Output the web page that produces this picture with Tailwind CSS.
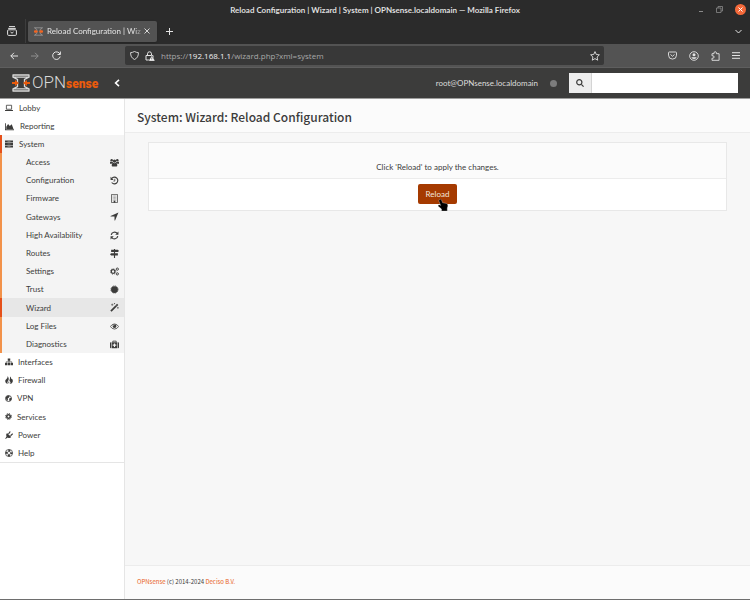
<!DOCTYPE html>
<html lang="en">
<head>
    <meta charset="UTF-8">
    <meta name="viewport" content="width=device-width, initial-scale=1">
    <title>Reload Configuration | Wizard | System | OPNsense.localdomain</title>
    <script src="https://cdn.jsdelivr.net/npm/@tailwindcss/browser@4"></script>
</head>
<body class="min-h-screen flex flex-col bg-white text-[#3c3c3b] text-[8px] leading-[18px] font-[Lato,sans-serif] border-b border-[#6e6e6e]">
    <!-- Icon sprite -->
    <svg class="hidden">
      <symbol id="laptop" viewBox="0 0 16 16"><path d="M2.800 2.500h10.400v8H2.800z" fill="none" stroke="currentColor" stroke-width="1.600"/><path d="M0 12h16v1q0 1.200-1 1.200H1Q0 14.200 0 13z"/></symbol>
      <symbol id="chart" viewBox="0 0 16 16"><path d="M0 2h1.500v11H16v1.500H0z"/><path d="M2.300 12.300V8.500L5.500 3.500l3 3.500L12 4l3 8.300z"/></symbol>
      <symbol id="server" viewBox="0 0 16 16"><path d="M0 1h16v4H0zM0 6h16v4H0zM0 11h16v4H0z"/><path d="M5 3h6M5 8h6M5 13h6" stroke="#aaa" stroke-width="1"/></symbol>
      <symbol id="users" viewBox="0 0 16 16"><circle cx="3" cy="4" r="2.200"/><circle cx="13" cy="4" r="2.200"/><circle cx="8" cy="5.500" r="3"/><path d="M0 10V7.500Q1 6 2 6.500q1.500 1 3 .3Q5 8 5.500 8.500 3.500 9 3 10zM16 10V7.500Q15 6 14 6.500q-1.500 1-3 .3Q11 8 10.500 8.500 12.500 9 13 10zM3 13.500Q3 9 5.500 8.500q2.500 1.500 5 0Q13 9 13 13.500q0 1.500-1.500 1.500h-7Q3 15 3 13.500z"/></symbol>
      <symbol id="history" viewBox="0 0 16 16"><path d="M3.200 4.200A6 6 0 1 1 3 11.500" fill="none" stroke="currentColor" stroke-width="2"/><path d="M1 1.500V7h5.500z"/><path d="M8.500 5v4H6" fill="none" stroke="currentColor" stroke-width="1.400"/></symbol>
      <symbol id="building" viewBox="0 0 16 16"><path d="M2.700 .7h10.600v14.600H2.700z" fill="none" stroke="currentColor" stroke-width="1.300"/><path d="M5 3.500h6M5 6h6M5 8.500h6M5 11h6" stroke="currentColor" stroke-width="1.100" stroke-dasharray="1.200 1.200"/><path d="M6.500 12h3v3.500h-3z"/></symbol>
      <symbol id="location" viewBox="0 0 16 16"><path d="M15 1 9 15H8V8H1V7z"/></symbol>
      <symbol id="refresh" viewBox="0 0 16 16"><path d="M2.200 7A6 6 0 0 1 13 4.500M13.800 9A6 6 0 0 1 3 11.500" fill="none" stroke="currentColor" stroke-width="2.100"/><path d="M15 1v5.700H9.300zM1 15V9.300h5.700z"/></symbol>
      <symbol id="signs" viewBox="0 0 16 16"><path d="M7 0h2v16H7z"/><path d="M2 1.500h12l2 2-2 2H2zM14 7.500H2l-2 2 2 2h12z"/></symbol>
      <symbol id="cogs" viewBox="0 0 16 16"><circle cx="5.500" cy="8" r="3.200" fill="none" stroke="currentColor" stroke-width="2.200"/><circle cx="5.500" cy="8" r="4.800" fill="none" stroke="currentColor" stroke-width="1.400" stroke-dasharray="1.900 1.870"/><circle cx="13" cy="3.800" r="2" fill="none" stroke="currentColor" stroke-width="1.700"/><circle cx="13" cy="12.200" r="2" fill="none" stroke="currentColor" stroke-width="1.700"/></symbol>
      <symbol id="certificate" viewBox="0 0 16 16"><circle cx="8" cy="8" r="6"/><circle cx="8" cy="8" r="6.300" fill="none" stroke="currentColor" stroke-width="1.500" stroke-dasharray="2 1.300"/></symbol>
      <symbol id="magic" viewBox="0 0 16 16"><path d="M.5 13.200 12.500 1.200l2.300 2.300L2.800 15.500z"/><path d="m10 4 2 2" stroke="#e7e7e7" stroke-width=".8"/><path d="M4 1v4M2 3h4M8 0v2M7 1h2M14 7v3M12.500 8.500h3" stroke="currentColor" stroke-width="1"/></symbol>
      <symbol id="eye" viewBox="0 0 16 16"><path d="M.7 8Q3.500 3.500 8 3.500T15.300 8Q12.500 12.500 8 12.500T.7 8z" fill="none" stroke="currentColor" stroke-width="1.400"/><circle cx="8" cy="7.300" r="3.500"/><path d="M6 7q0-2 2-2" fill="none" stroke="#f4f4f4" stroke-width=".8"/></symbol>
      <symbol id="medkit" viewBox="0 0 16 16"><path d="M5 4V2h6v2" fill="none" stroke="currentColor" stroke-width="1.500"/><path d="M0 5.500Q0 4 1.500 4H2v10.500h-.5Q0 14.500 0 13zM3 4h10v10.500H3zM16 5.500Q16 4 14.500 4H14v10.500h.5q1.500 0 1.500-1.500z"/><path d="M8 6v6.500M4.800 9.200h6.400" stroke="#f4f4f4" stroke-width="2"/></symbol>
      <symbol id="sitemap" viewBox="0 0 16 16"><path d="M5.500 1h5v4.500h-5zM0 10h4.700v4.700H0zM5.700 10h4.600v4.700H5.700zM11.300 10H16v4.700h-4.700z"/><path d="M2.200 11V7.800h11.600V11M8 4v7" fill="none" stroke="currentColor" stroke-width="1.400"/></symbol>
      <symbol id="fire" viewBox="0 0 16 16"><path d="M5 0Q6 4 2.500 6.500T1.500 13.500q1.500 2 4 2.500Q4 12.500 6 10q2-2 1.300-5.500Q6.800 1.500 5 0zM10 1q3 2 2 5.500 1-.5 1.200-1.500Q17 8 15 12.500q-1.500 3.500-5 3.500 1.500-2.500.5-4.500-2-1-1.500-3.500Q10.500 5 10 1zM7 10.500q2.300 2 1.200 5-2.200-2-1.200-5z"/></symbol>
      <symbol id="globe" viewBox="0 0 16 16"><circle cx="8" cy="8" r="6.800" fill="none" stroke="currentColor" stroke-width="2"/><path d="M2 4.500 7 1l3.500 1.500L9 6 6 7l1 2-1.500 4L3 10 2 7zM10 7.500l5-1-.5 4.500-3.500 3-1.500-3z"/></symbol>
      <symbol id="gear" viewBox="0 0 16 16"><circle cx="8" cy="8" r="4" fill="none" stroke="currentColor" stroke-width="3.600"/><circle cx="8" cy="8" r="6.800" fill="none" stroke="currentColor" stroke-width="2.200" stroke-dasharray="2.800 2.540"/></symbol>
      <symbol id="plug" viewBox="0 0 16 16"><path d="M4 4l8.500 8Q9.500 15.500 5.500 13L2.500 15 0 16l3-5Q1 7 4 4z"/><path d="m7 6 3.500-5M11 9.500l4.500-4" stroke="currentColor" stroke-width="2.400"/></symbol>
      <symbol id="ring" viewBox="0 0 16 16"><circle cx="8" cy="8" r="7.200" fill="none" stroke="currentColor" stroke-width="1.500"/><circle cx="8" cy="8" r="3.200" fill="none" stroke="currentColor" stroke-width="1.300"/><circle cx="8" cy="8" r="5" fill="none" stroke="currentColor" stroke-width="3.500" stroke-dasharray="4 3.850" stroke-dashoffset="2"/></symbol>
      <symbol id="hourglass" viewBox="0 0 18 18">
        <path d="M.5 1h17M.5 17h17M1 3.200h4M13 3.200h4M1 14.800h4M13 14.800h4M4.500 3.200h9M4.500 14.800h9M1 1v2l4.500 2.500v7L1 15v2M17 1v2l-4.500 2.500v7L17 15v2" fill="none" stroke="currentColor" stroke-width="1.300"/>
        <path d="M0 8h3V6l4 3-4 3v-2H0zM18 8h-3V6l-4 3 4 3v-2h3z" fill="#ea5b0c"/>
      </symbol>
      <symbol id="favicon" viewBox="0 0 9 9">
        <path d="M0 .8h9M0 8.200h9M1 1l2 1.700v3.600L1 8M8 1 6 2.700v3.600L8 8" fill="none" stroke="currentColor" stroke-width=".8"/>
        <path d="M0 3.500h1.500V2.500L4 4.500l-2.500 2v-1H0zM9 3.500H7.500V2.500L5 4.500l2.500 2v-1H9z" fill="#f26522"/>
      </symbol>
    </svg>

    <!-- Window title -->
    <div class="grid grid-cols-[1fr_auto_1fr] items-center h-[19px] bg-[#2b2b2b] text-[#dfdfdf]">
      <span></span>
      <div class="font-bold text-[8px] whitespace-nowrap">Reload Configuration | Wizard | System | OPNsense.localdomain — Mozilla Firefox</div>
      <div class="flex justify-end items-center gap-[12px] pr-[4px] text-[#8a8a8a]">
        <button aria-label="Minimize"><svg class="w-[6px] h-[6px]" viewBox="0 0 6 6"><path d="M1 4.500h4" stroke="currentColor"/></svg></button>
        <button aria-label="Maximize"><svg class="w-[7px] h-[7px]" viewBox="0 0 7 7" fill="none" stroke="currentColor" stroke-width=".8"><path d="M.5 2h4.500v4.500H.5zM2 2V.5h4.500V5H5"/></svg></button>
        <button aria-label="Close"><svg class="w-[11px] h-[11px]" viewBox="0 0 11 11"><circle cx="5.500" cy="5.500" r="5.500" fill="#f4693a"/><path d="m3.500 3.500 4 4m0-4-4 4" stroke="#fff"/></svg></button>
      </div>
    </div>

    <!-- Tabs -->
    <div class="flex items-center h-[25px] pb-px bg-[#2b2b2b] text-[#e4e4e4]">
      <button class="ml-[7px]" aria-label="Recent browsing"><svg class="w-[10px] h-[10px]" viewBox="0 0 10 10" fill="none" stroke="currentColor" stroke-width="1"><path d="M2 .6h6M1.200 2.400h7.600"/><rect x=".6" y="3.800" width="8.800" height="5.600" rx="1"/><path d="m3.500 6 1.500 1.200L6.500 6"/></svg></button>
      <span class="ml-[8px] mr-[2px] w-px h-full bg-[#3d3d3d]"></span>
      <div class="flex items-center h-[21px] w-[129px] rounded-[2px] bg-[#535353] pl-[6px] pr-[7px] shadow-sm">
        <svg class="w-[9px] h-[9px] shrink-0 text-[#9a9a9a]"><use href="#favicon"/></svg>
        <span class="ml-[4px] flex-1 whitespace-nowrap text-[8px] mask-r-from-90%">Reload Configuration | Wiz</span>
        <button aria-label="Close tab"><svg class="w-[6px] h-[6px]" viewBox="0 0 6 6"><path d="m.5.5 5 5m0-5-5 5" stroke="currentColor" stroke-width=".9"/></svg></button>
      </div>
      <button class="ml-[9px]" aria-label="New tab"><svg class="w-[7px] h-[7px]" viewBox="0 0 7 7"><path d="M3.500 0v7M0 3.500h7" stroke="currentColor"/></svg></button>
      <button class="ml-auto mr-[8px]" aria-label="List all tabs"><svg class="w-[7px] h-[7px]" viewBox="0 0 7 7" fill="none"><path d="m.5 2 3 3 3-3" stroke="currentColor"/></svg></button>
    </div>

    <!-- Toolbar -->
    <div class="flex items-center h-[24px] bg-[#535353] text-[#e4e4e4] font-['Open_Sans',sans-serif] border-b border-[#5e5e5e]">
      <button class="ml-[10px]" aria-label="Back"><svg class="w-[8px] h-[8px]" viewBox="0 0 8 8" fill="none" stroke="currentColor"><path d="M8 4H.8M4 .8.8 4 4 7.200"/></svg></button>
      <button class="ml-[13px] text-[#8f8f8f]" aria-label="Forward"><svg class="w-[8px] h-[8px]" viewBox="0 0 8 8" fill="none" stroke="currentColor"><path d="M0 4h7.200M4 .8 7.200 4 4 7.200"/></svg></button>
      <button class="ml-[13px]" aria-label="Reload page"><svg class="w-[9px] h-[9px]" viewBox="0 0 9 9" fill="none" stroke="currentColor"><path d="M8 3.200A3.800 3.800 0 1 0 8.200 5.500M8.400.5v3H5.500"/></svg></button>
      <div class="ml-[64px] flex-1 flex items-center h-[19px] rounded-[2px] bg-[#383838] pl-[5px] pr-[4px]">
        <svg class="w-[9px] h-[9px] shrink-0" viewBox="0 0 9 9" fill="none" stroke="currentColor" stroke-width=".9"><path d="M4.500.5Q6.500 1.600 8.400 1.600 8.600 6.600 4.500 8.500.4 6.600.6 1.600 2.500 1.600 4.500.5z"/></svg>
        <svg class="ml-[6px] w-[10px] h-[10px] shrink-0" viewBox="0 0 10 10"><path d="M2.500 4V2.800a2 2 0 0 1 4 0V4M1 4.500h7v4.500H1z" fill="none" stroke="currentColor"/><path d="M6.800 4.500 10 10H3.600z" fill="#fff" stroke="#383838" stroke-width=".4"/><path d="M6.800 6.500v2" stroke="#383838" stroke-width=".7"/></svg>
        <div class="ml-[6px] flex-1 text-[8px] text-[#a8a8a8]">https://<span class="text-[#f2f2f2]">192.168.1.1</span>/wizard.php?xml=system</div>
        <button aria-label="Bookmark this page"><svg class="w-[10px] h-[10px]" viewBox="0 0 10 10" fill="none" stroke="currentColor" stroke-width=".9" stroke-linejoin="round"><path d="m5 .6 1.300 2.900 3.100.3L7.100 6l.6 3.200L5 7.600 2.300 9.200 2.900 6 .6 3.800l3.100-.3z"/></svg></button>
      </div>
      <div class="ml-[64px] mr-[10px] flex items-center gap-[12px]">
        <button aria-label="Pocket"><svg class="w-[9px] h-[9px]" viewBox="0 0 9 9" fill="none" stroke="currentColor" stroke-width=".9"><path d="M1.300 1h6.400q.8 0 .8.8v2.300a4 4 0 0 1-8 0V1.800Q.5 1 1.300 1zM2.500 3.500l2 1.800 2-1.800"/></svg></button>
        <button aria-label="Account"><svg class="w-[10px] h-[10px]" viewBox="0 0 10 10"><circle cx="5" cy="5" r="4.300" fill="none" stroke="currentColor" stroke-width=".9"/><circle cx="5" cy="3.700" r="1.500" fill="currentColor"/><path d="M2.300 6.200h5.400Q7.300 8 5 8T2.300 6.200z" fill="currentColor"/></svg></button>
        <button aria-label="Extensions"><svg class="w-[9px] h-[10px]" viewBox="0 0 9 10" fill="none" stroke="currentColor" stroke-width=".9" stroke-linejoin="round"><path d="M3 2.700V1.900a1.200 1.200 0 0 1 2.400 0v.8h2.700v6.600H1V7.200h.9a1.200 1.200 0 0 0 0-2.400H1V2.700z"/></svg></button>
        <button aria-label="Menu"><svg class="w-[8px] h-[7px]" viewBox="0 0 8 7" stroke="currentColor"><path d="M0 .7h8M0 3.500h8M0 6.300h8"/></svg></button>
      </div>
    </div>

    <!-- OPNsense header -->
    <header class="flex items-center h-[31px] pl-[12px] pr-[12px] bg-[#3c3c3b] text-[#dcdcdc] border-b border-[#9d9d9c]">
      <a href="#" class="flex items-center text-[#d8d8d8] font-[Roboto,sans-serif]">
        <svg class="w-[18px] h-[18px] mr-[2px] text-[#dadada]"><use href="#hourglass"/></svg>
        <span class="flex items-baseline">
          <span class="text-[17px] font-light">OPN</span>
          <span class="text-[12px] font-black text-[#ea5b0c]">sense</span>
        </span>
      </a>
      <button class="ml-[16px] text-white" aria-label="Toggle sidebar"><svg class="w-[6px] h-[8px]" viewBox="0 0 6 8" fill="none"><path d="M5 .8 1.600 4 5 7.200" stroke="currentColor" stroke-width="1.600"/></svg></button>
      <span class="ml-auto">root@OPNsense.localdomain</span>
      <span class="ml-[12px] w-[7px] h-[7px] rounded-full bg-[#7d7d7d]"></span>
      <form class="ml-[12px] flex h-[20px] w-[169px] bg-white">
        <label for="search" class="flex items-center justify-center w-[23px] bg-[#ededed] border-r border-[#d4d4d4] text-[#3c3c3b]">
          <svg class="w-[8px] h-[8px]" viewBox="0 0 8 8" fill="none" stroke="currentColor" stroke-width="1.200"><circle cx="3.300" cy="3.300" r="2.600"/><path d="m5.300 5.300 2.300 2.300"/></svg>
        </label>
        <input id="search" type="text" aria-label="Search" class="flex-1 min-w-0 px-1 outline-none">
      </form>
    </header>

    <div class="flex-1 flex">
      <!-- Sidebar -->
      <aside class="w-[125px] shrink-0 border-r border-[#e5e5e5]">
        <nav class="border-b border-[#e5e5e5]">
          <a href="#" class="flex items-center h-[18px] pl-[5px] gap-[6px]"><svg class="w-[8px] h-[8px]" fill="currentColor"><use href="#laptop"/></svg>Lobby</a>
          <a href="#" class="flex items-center h-[18px] pl-[5px] gap-[6px]"><svg class="w-[9px] h-[9px]" fill="currentColor"><use href="#chart"/></svg>Reporting</a>
          <a href="#" class="flex items-center h-[18px] pl-[3px] gap-[6px] bg-[#f4f4f4] border-l-2 border-[#e5501a]"><svg class="w-[8px] h-[8px]" fill="currentColor"><use href="#server"/></svg>System</a>
          <div class="bg-[#f4f4f4] border-l-2 border-[#f2924a]">
            <a href="#" class="flex items-center justify-between h-[18px] pl-[24px] pr-[5px]">Access<svg class="w-[9px] h-[9px]" fill="currentColor"><use href="#users"/></svg></a>
            <a href="#" class="flex items-center justify-between h-[18px] pl-[24px] pr-[5px]">Configuration<svg class="w-[9px] h-[9px]" fill="currentColor"><use href="#history"/></svg></a>
            <a href="#" class="flex items-center justify-between h-[18px] pl-[24px] pr-[5px]">Firmware<svg class="w-[9px] h-[9px]" fill="currentColor"><use href="#building"/></svg></a>
            <a href="#" class="flex items-center justify-between h-[19px] pl-[24px] pr-[5px]">Gateways<svg class="w-[9px] h-[9px]" fill="currentColor"><use href="#location"/></svg></a>
            <a href="#" class="flex items-center justify-between h-[18px] pl-[24px] pr-[5px]">High Availability<svg class="w-[9px] h-[9px]" fill="currentColor"><use href="#refresh"/></svg></a>
            <a href="#" class="flex items-center justify-between h-[18px] pl-[24px] pr-[5px]">Routes<svg class="w-[9px] h-[9px]" fill="currentColor"><use href="#signs"/></svg></a>
            <a href="#" class="flex items-center justify-between h-[18px] pl-[24px] pr-[5px]">Settings<svg class="w-[9px] h-[9px]" fill="currentColor"><use href="#cogs"/></svg></a>
            <a href="#" class="flex items-center justify-between h-[18px] pl-[24px] pr-[5px]">Trust<svg class="w-[9px] h-[9px]" fill="currentColor"><use href="#certificate"/></svg></a>
            <a href="#" class="flex items-center justify-between h-[19px] pl-[24px] pr-[5px] -ml-[2px] border-l-2 border-[#e5501a] bg-[#e7e7e7]">Wizard<svg class="w-[9px] h-[9px]" fill="currentColor"><use href="#magic"/></svg></a>
            <a href="#" class="flex items-center justify-between h-[18px] pl-[24px] pr-[5px]">Log Files<svg class="w-[9px] h-[9px]" fill="currentColor"><use href="#eye"/></svg></a>
            <a href="#" class="flex items-center justify-between h-[18px] pl-[24px] pr-[5px]">Diagnostics<svg class="w-[9px] h-[9px]" fill="currentColor"><use href="#medkit"/></svg></a>
          </div>
          <a href="#" class="flex items-center h-[18px] pl-[5px] gap-[5px]"><svg class="w-[8px] h-[8px]" fill="currentColor"><use href="#sitemap"/></svg>Interfaces</a>
          <a href="#" class="flex items-center h-[18px] pl-[5px] gap-[5px]"><svg class="w-[8px] h-[8px]" fill="currentColor"><use href="#fire"/></svg>Firewall</a>
          <a href="#" class="flex items-center h-[18px] pl-[5px] gap-[5px]"><svg class="w-[7px] h-[7px]" fill="currentColor"><use href="#globe"/></svg>VPN</a>
          <a href="#" class="flex items-center h-[19px] pl-[5px] gap-[5px]"><svg class="w-[7px] h-[7px]" fill="currentColor"><use href="#gear"/></svg>Services</a>
          <a href="#" class="flex items-center h-[18px] pl-[5px] gap-[5px]"><svg class="w-[8px] h-[8px]" fill="currentColor"><use href="#plug"/></svg>Power</a>
          <a href="#" class="flex items-center h-[18px] pl-[5px] gap-[5px]"><svg class="w-[8px] h-[8px]" fill="currentColor"><use href="#ring"/></svg>Help</a>
        </nav>
      </aside>

      <!-- Content -->
      <div class="flex-1 flex flex-col bg-[#f7f7f7]">
        <div class="flex items-center h-[34px] pl-[12px] bg-[#fbfbfb] border-b border-[#ececec]">
          <h1 class="text-[12px] font-medium font-['Noto_Sans_CJK_SC',sans-serif] pt-[2px]">System: Wizard: Reload Configuration</h1>
        </div>
        <main class="flex-1 pt-[9px] pl-[23px] pr-[23px]">
          <form class="border border-[#e8e8e8] bg-white text-center">
            <p class="h-[36px] pt-[15px] bg-[#fbfbfb] border-b border-[#ececec]">Click 'Reload' to apply the changes.</p>
            <div class="flex justify-center pt-[5px] pb-[6px]">
              <div class="relative">
                <button type="button" class="block h-[20px] w-[39px] rounded-[2px] bg-[#a53a00] text-[#f4e6de]">Reload</button>
                <svg class="absolute left-[20px] top-[15px] w-[10px] h-[12px]" viewBox="0 0 10 12"><path d="M1.500.5Q3-.3 3.600 1l1 2.700 4 .8Q10 5 9.900 7L9.300 9v3H3.500V10L.2 7.200Q-.2 5.500 1.300 5.700l1.300.7L.9 2Q.7.900 1.500.5z" fill="#000" stroke="#fff" stroke-width=".3"/></svg>
              </div>
            </div>
          </form>
        </main>
        <footer class="h-[34px] pl-[12px] pt-[7px] text-[6px] font-['Noto_Sans_CJK_SC',sans-serif] bg-[#fbfbfb] border-t border-[#ececec]">
          <a href="#" class="text-[#e8641e]">OPNsense</a> (c) 2014-2024 <a href="#" class="text-[#e8641e]">Deciso B.V.</a>
        </footer>
      </div>
    </div>
</body>
</html>
